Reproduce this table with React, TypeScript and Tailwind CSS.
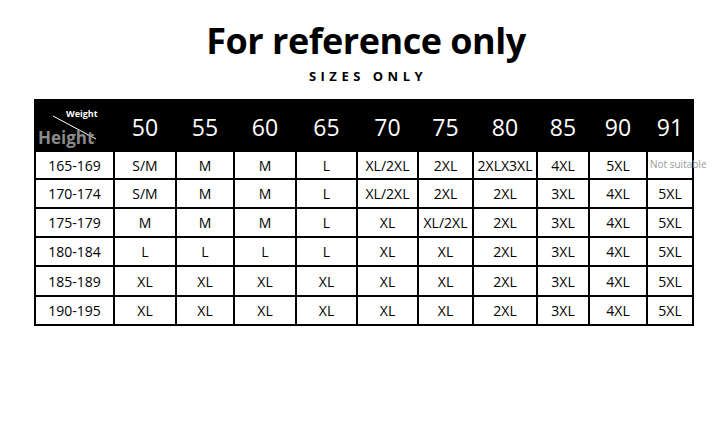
import React from 'react'

const weights = ['50', '55', '60', '65', '70', '75', '80', '85', '90', '91']

const rows: { height: string; sizes: string[] }[] = [
  { height: '165-169', sizes: ['S/M', 'M', 'M', 'L', 'XL/2XL', '2XL', '2XLX3XL', '4XL', '5XL', ''] },
  { height: '170-174', sizes: ['S/M', 'M', 'M', 'L', 'XL/2XL', '2XL', '2XL', '3XL', '4XL', '5XL'] },
  { height: '175-179', sizes: ['M', 'M', 'M', 'L', 'XL', 'XL/2XL', '2XL', '3XL', '4XL', '5XL'] },
  { height: '180-184', sizes: ['L', 'L', 'L', 'L', 'XL', 'XL', '2XL', '3XL', '4XL', '5XL'] },
  { height: '185-189', sizes: ['XL', 'XL', 'XL', 'XL', 'XL', 'XL', '2XL', '3XL', '4XL', '5XL'] },
  { height: '190-195', sizes: ['XL', 'XL', 'XL', 'XL', 'XL', 'XL', '2XL', '3XL', '4XL', '5XL'] },
]

const rowHeights = ['h-[26px]', 'h-[27px]', 'h-[27px]', 'h-[27px]', 'h-[28px]', 'h-[27px]']

export default function App() {
  return (
    <div className="w-[720px] h-[428px] bg-white font-['Open_Sans',sans-serif] text-black">
      <div className="flex flex-col items-center pt-[19px] pl-[12px]">
        <h1 className="text-[36px] leading-[44px] font-bold tracking-[-0.5px]">For reference only</h1>
        <div className="mt-[5px] text-[13px] leading-[17px] font-bold tracking-[4.5px] pl-[4px]">SIZES ONLY</div>
      </div>

      <div className="ml-[34px] mt-[14px] w-[660px] bg-black p-[2px]">
        <div className="grid grid-cols-[77px_60px_56px_60px_59px_59px_53px_62px_50px_56px_44px] gap-[2px]">
          {/* header */}
          <div className="relative h-[49px] bg-black">
            <span className="absolute left-[30px] top-[6px] text-[9px] font-bold text-white">Weight</span>
            <svg className="absolute left-0 top-0" width="77" height="49" viewBox="0 0 77 49">
              <line x1="17" y1="15" x2="60" y2="38" stroke="white" strokeWidth="1" />
            </svg>
            <span className="absolute left-[2px] top-[27px] text-[17px] leading-[20px] font-bold text-[#8a8a8a]">Height</span>
          </div>
          {weights.map((w) => (
            <div key={w} className="h-[49px] bg-black flex items-center justify-center text-[23px] text-white pt-[3px]">
              {w}
            </div>
          ))}

          {rows.map((row, i) => (
            <React.Fragment key={row.height}>
              <div className={`${rowHeights[i]} bg-white flex items-center justify-center text-[14px]`}>{row.height}</div>
              {row.sizes.map((s, j) => (
                <div key={j} className={`${rowHeights[i]} relative bg-white flex items-center justify-center text-[14px]`}>
                  {s}
                  {i === 0 && j === 9 && (
                    <span className="absolute left-[2px] top-[6px] text-[10px] leading-[13px] text-[#9a9a9a] whitespace-nowrap">Not suitable</span>
                  )}
                </div>
              ))}
            </React.Fragment>
          ))}
        </div>
      </div>
    </div>
  )
}
